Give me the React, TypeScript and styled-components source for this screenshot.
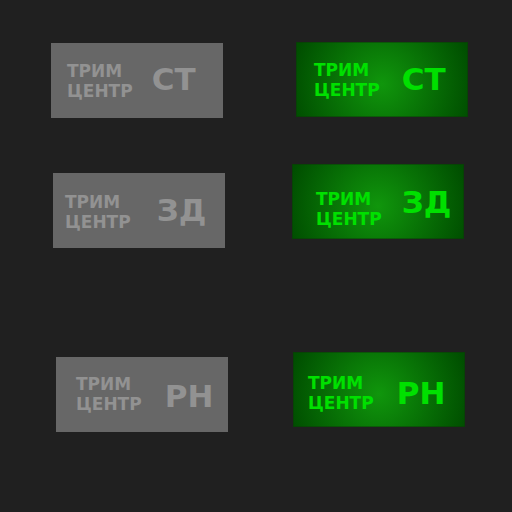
import React from "react";
import styled, { createGlobalStyle } from "styled-components";

const GlobalStyle = createGlobalStyle`
  body {
    margin: 0;
    background: #202020;
    font-family: "DejaVu Sans", sans-serif;
    font-weight: 700;
  }
`;

const Panel = styled.main`
  display: grid;
  grid-template-columns: 1fr 1fr;
  min-height: 100vh;
`;

const Column = styled.section`
  display: flex;
  flex-direction: column;
  align-items: flex-start;
`;

const Lamp = styled.div<{ $lit: boolean; $above: number; $indent: number; $pad: number; $gap: number }>`
  display: flex;
  align-items: flex-start;
  box-sizing: border-box;
  width: 172px;
  min-height: 75px;
  margin: ${(p) => p.$above}px 0 0 ${(p) => p.$indent}px;
  padding-left: ${(p) => p.$pad}px;
  gap: ${(p) => p.$gap}px;
  color: ${(p) => (p.$lit ? "#00e000" : "#929292")};
  background: ${(p) =>
    p.$lit
      ? "radial-gradient(circle 92px at 50% 56%, #10960c 0%, #004e00 100%)"
      : "#676767"};
  box-shadow: ${(p) => (p.$lit ? "inset 0 0 0 1px rgba(16, 50, 12, 0.45)" : "none")};
`;

const Caption = styled.div<{ $top: number }>`
  display: flex;
  flex-direction: column;
  padding-top: ${(p) => p.$top}px;
  font-size: 17px;
  line-height: 20px;
`;

const Code = styled.div<{ $top: number }>`
  padding-top: ${(p) => p.$top}px;
  font-size: 31px;
  line-height: 38px;
`;

type LampData = {
  code: string;
  above: number;
  indent: number;
  pad: number;
  gap: number;
  captionTop: number;
  codeTop: number;
};

const unlit: LampData[] = [
  { code: "СТ", above: 43, indent: 51, pad: 16, gap: 19, captionTop: 18, codeTop: 17 },
  { code: "ЗД", above: 55, indent: 53, pad: 12, gap: 26, captionTop: 19, codeTop: 18 },
  { code: "РН", above: 109, indent: 56, pad: 20, gap: 23, captionTop: 17, codeTop: 20 },
];

const lit: LampData[] = [
  { code: "СТ", above: 42, indent: 40, pad: 18, gap: 22, captionTop: 18, codeTop: 18 },
  { code: "ЗД", above: 47, indent: 36, pad: 24, gap: 20, captionTop: 25, codeTop: 19 },
  { code: "РН", above: 113, indent: 37, pad: 15, gap: 23, captionTop: 21, codeTop: 22 },
];

function LampColumn({ lamps, on }: { lamps: LampData[]; on: boolean }) {
  return (
    <Column>
      {lamps.map((l) => (
        <Lamp key={l.code} $lit={on} $above={l.above} $indent={l.indent} $pad={l.pad} $gap={l.gap}>
          <Caption $top={l.captionTop}>
            <span>ТРИМ</span>
            <span>ЦЕНТР</span>
          </Caption>
          <Code $top={l.codeTop}>{l.code}</Code>
        </Lamp>
      ))}
    </Column>
  );
}

export default function App() {
  return (
    <>
      <GlobalStyle />
      <Panel>
        <LampColumn lamps={unlit} on={false} />
        <LampColumn lamps={lit} on />
      </Panel>
    </>
  );
}
